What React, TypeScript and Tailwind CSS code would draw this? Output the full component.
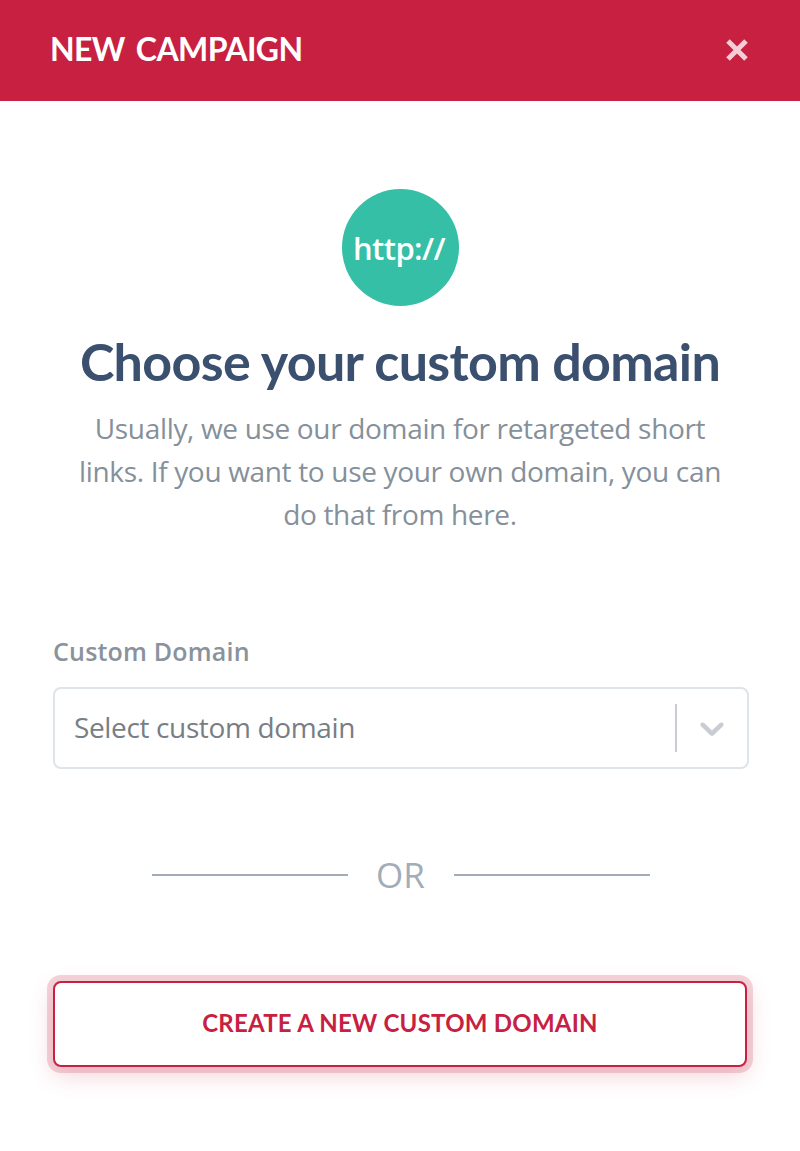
const Divider = () => <span className="h-[2px] w-[196px] bg-[#a3acb9]" />;

const DomainSelect = () => (
  <div className="flex h-[82px] w-[696px] items-center rounded-lg border-2 border-[#dfe4e9] bg-white pl-[19px]">
    <span className="flex-1 pb-[3px] text-[28px] tracking-[-0.36px] text-[#777e85]">Select custom domain</span>
    <span className="h-[48px] w-[2px] bg-[#c9ccd2]" />
    <svg width="40" height="40" viewBox="0 0 20 20" className="mx-[15px] fill-[#c9ccd2]">
      <path d="M4.516 7.548c0.436-0.446 1.043-0.481 1.576 0l3.908 3.747 3.908-3.747c0.533-0.481 1.141-0.446 1.574 0 0.436 0.445 0.408 1.197 0 1.615-0.406 0.418-4.695 4.502-4.695 4.502-0.217 0.223-0.502 0.335-0.787 0.335s-0.57-0.112-0.789-0.335c0 0-4.287-4.084-4.695-4.502s-0.436-1.17 0-1.615z" />
    </svg>
  </div>
);

export default function App() {
  return (
    <div className="h-[1151px] w-[800px] overflow-hidden bg-white font-['Open_Sans',sans-serif]">
      {/* Header */}
      <header className="flex h-[101px] items-center justify-between bg-[#c72041] pr-[52px] pb-[2px] pl-[50px]">
        <h1 className="pb-px font-['Lato',sans-serif] text-[32px] font-bold tracking-[-0.6px] text-white [word-spacing:4px]">
          NEW CAMPAIGN
        </h1>
        <button aria-label="Close">
          <svg width="22" height="22" viewBox="0 0 22 22" className="stroke-[#f4cdd7]" strokeWidth="5">
            <path d="M2 2L20 20M20 2L2 20" />
          </svg>
        </button>
      </header>

      <main className="flex flex-col px-[53px] pt-[88px]">
        {/* Intro */}
        <section className="flex flex-col items-center text-center">
          <div className="flex h-[117px] w-[117px] items-center justify-center rounded-full bg-[#35bfa6] pt-[2px] pr-[2px] text-[31px] font-semibold tracking-[-0.6px] text-white">
            http://
          </div>
          <h2 className="mt-[24px] font-['Lato',sans-serif] text-[52px] leading-[62px] font-bold tracking-[-0.65px] whitespace-nowrap text-[#3b506f]">
            Choose your custom domain
          </h2>
          <p className="mt-[15px] text-[28px] leading-[43px] tracking-[-0.33px] whitespace-nowrap text-[#85909a]">
            Usually, we use our domain for retargeted short
            <br />
            links. If you want to use your own domain, you can
            <br />
            do that from here.
          </p>
        </section>

        {/* Domain picker */}
        <section className="mt-[95px]">
          <label className="mb-[16px] block text-[25px] leading-[40px] font-semibold tracking-[0.2px] text-[#89929d]">
            Custom Domain
          </label>
          <DomainSelect />
        </section>

        <div className="mt-[81px] flex h-[50px] items-center pl-[99px]">
          <Divider />
          <span className="mr-[29px] ml-[28px] text-[35px] text-[#a3acb9]">OR</span>
          <Divider />
        </div>

        <button className="mt-[81px] h-[86px] w-[694px] rounded-lg border-2 border-[#c72041] bg-white pb-[2px] font-['Lato',sans-serif] text-[24px] font-bold tracking-[0.24px] text-[#c72041] shadow-[0_0_0_6px_#c7204130,0_8px_24px_#c7204133]">
          CREATE A NEW CUSTOM DOMAIN
        </button>
      </main>
    </div>
  );
}
